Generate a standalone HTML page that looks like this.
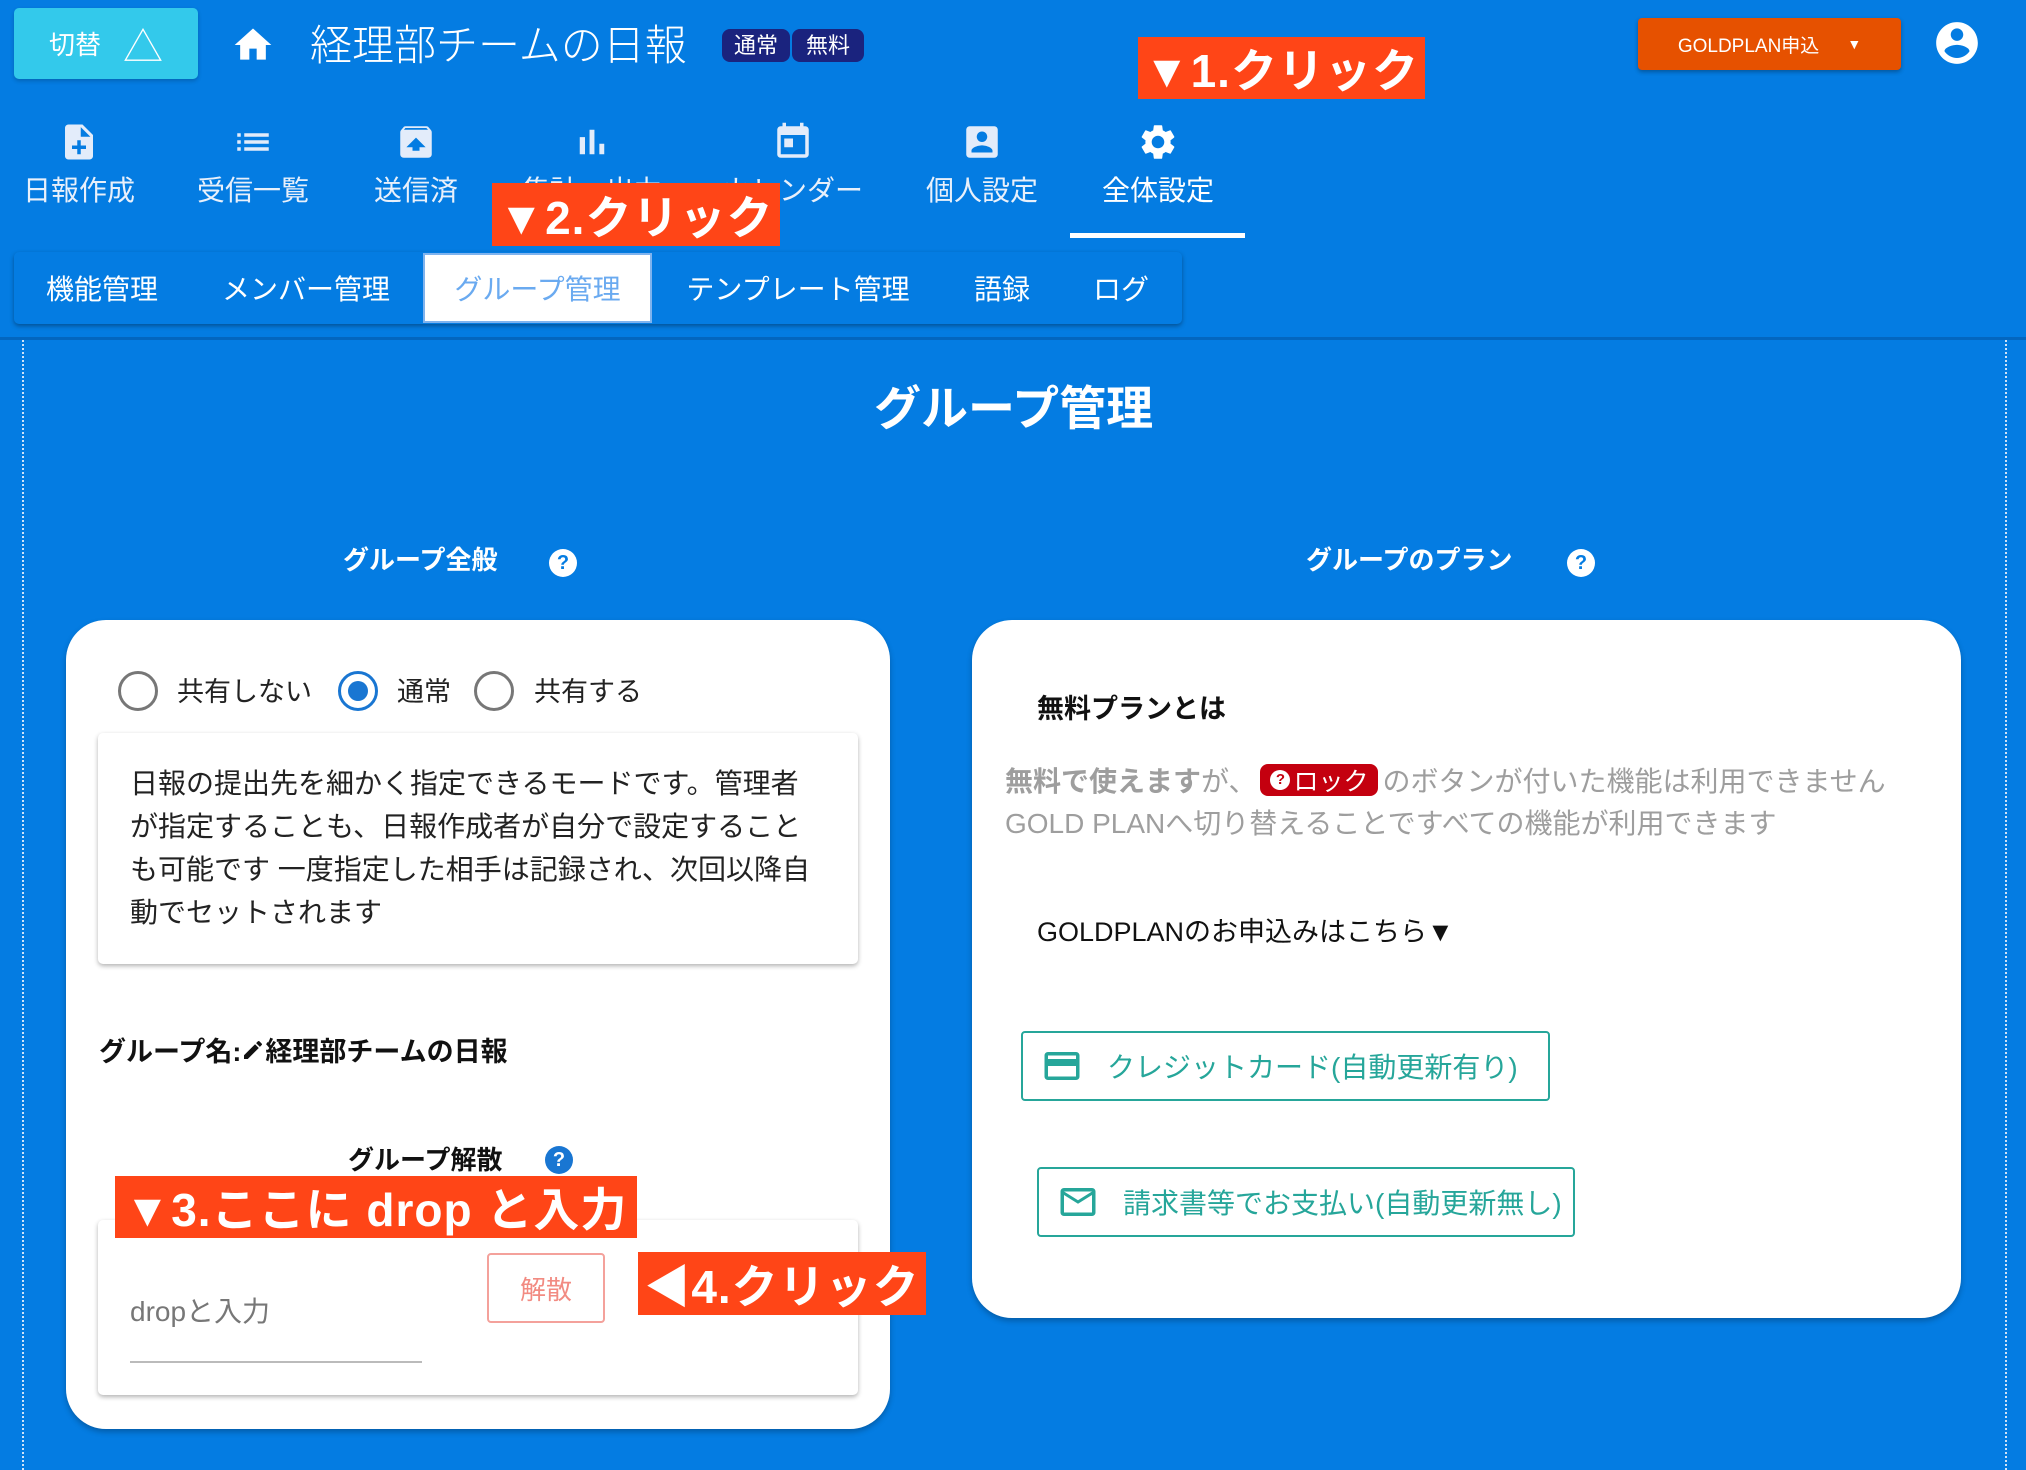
<!DOCTYPE html>
<html><head><meta charset="utf-8"><style>
*{margin:0;padding:0;box-sizing:border-box}
body{width:2026px;height:1470px;background:#047ce2;position:relative;overflow:hidden;font-family:"Liberation Sans","Noto Sans CJK JP",sans-serif;color:#fff}
.a{position:absolute;white-space:nowrap}
.tag{background:#ff4517;color:#fff;font-weight:bold;font-size:46px;display:flex;align-items:center;justify-content:center;letter-spacing:1px}
.nav{position:absolute;top:121px;width:180px;text-align:center;font-size:28px;color:#e8f0fb}
.nav svg{width:42px;height:42px;display:block;margin:0 auto 6px}
.sub{position:absolute;top:252px;height:72px;font-size:28px;display:flex;align-items:center;justify-content:center;color:#fff}
.card{position:absolute;background:#fff;border-radius:40px;box-shadow:0 3px 6px rgba(0,0,0,.25)}
.box{position:absolute;background:#fff;border-radius:5px;box-shadow:0 2px 5px rgba(0,0,0,.3)}
.q{display:inline-block;width:28px;height:28px;border-radius:50%;background:#fff;color:#047ce2;font-size:20px;font-weight:bold;text-align:center;line-height:28px}
.radio{position:absolute;width:40px;height:40px;border-radius:50%;border:3px solid #777}
.rl{position:absolute;font-size:27px;color:#222;top:670px}
</style></head><body>
<!-- header -->
<div class="a" style="left:14px;top:8px;width:184px;height:71px;background:#33c9eb;border-radius:5px;box-shadow:0 2px 4px rgba(0,0,0,.2);display:flex;align-items:center;justify-content:center;font-size:26px;gap:22px">切替 <span style="font-size:40px;font-weight:300">△</span></div>
<svg class="a" style="left:231px;top:23px" width="44" height="44" viewBox="0 0 24 24"><path fill="#fff" d="M10 20v-6h4v6h5v-8h3L12 3 2 12h3v8z"/></svg>
<div class="a" style="left:310px;top:12px;font-size:42px;font-weight:300">経理部チームの日報</div>
<div class="a" style="left:722px;top:29px;height:33px;display:flex;gap:2px;font-size:22px"><span style="background:#1a237e;border-radius:8px;padding:0 12px;line-height:33px">通常</span><span style="background:#1a237e;border-radius:8px;padding:0 14px;line-height:33px">無料</span></div>
<div class="a tag" style="left:1138px;top:37px;width:287px;height:62px">▼1.クリック</div>
<div class="a" style="left:1638px;top:18px;width:263px;height:52px;background:#e65100;border-radius:4px;box-shadow:0 2px 4px rgba(0,0,0,.3);font-size:19px;display:flex;align-items:center;justify-content:center;gap:28px">GOLDPLAN申込 <span style="font-size:14px">▼</span></div>
<svg class="a" style="left:1932px;top:18px" width="50" height="50" viewBox="0 0 24 24"><path fill="#fff" d="M12 2C6.48 2 2 6.48 2 12s4.48 10 10 10 10-4.480 10-10S17.52 2 12 2zm0 3c1.66 0 3 1.34 3 3s-1.34 3-3 3-3-1.34-3-3 1.34-3 3-3zm0 14.2c-2.5 0-4.71-1.28-6-3.22.03-1.99 4-3.08 6-3.08 1.99 0 5.97 1.09 6 3.08-1.29 1.94-3.5 3.22-6 3.22z"/></svg>
<!-- nav -->
<div class="nav" style="left:-11px"><svg viewBox="0 0 24 24"><path fill="#e3ecfa" d="M14 2H6c-1.1 0-1.99.9-1.99 2L4 20c0 1.1.89 2 1.99 2H18c1.1 0 2-.9 2-2V8l-6-6zm2 14h-3v3h-2v-3H8v-2h3v-3h2v3h3v2zm-3-7V3.5L18.5 9H13z"/></svg>日報作成</div>
<div class="nav" style="left:163px"><svg viewBox="0 0 24 24"><path fill="#e3ecfa" d="M3 13h2v-2H3v2zm0 4h2v-2H3v2zm0-8h2V7H3v2zm4 4h14v-2H7v2zm0 4h14v-2H7v2zM7 7v2h14V7H7z"/></svg>受信一覧</div>
<div class="nav" style="left:326px"><svg viewBox="0 0 24 24"><path fill="#e3ecfa" d="M20.55 5.22l-1.39-1.68C18.88 3.21 18.47 3 18 3H6c-.47 0-.88.21-1.15.55L3.46 5.22C3.17 5.57 3 6.01 3 6.5V19c0 1.1.89 2 2 2h14c1.1 0 2-.9 2-2V6.5c0-.49-.17-.93-.45-1.28zM12 9.5l5.5 5.5H14v2h-4v-2H6.5L12 9.5zM5.12 5l.82-1h12l.93 1H5.12z"/></svg>送信済</div>
<div class="nav" style="left:502px"><svg viewBox="0 0 24 24"><path fill="#e3ecfa" d="M5 9.2h3V19H5zM10.6 5h2.8v14h-2.8zm5.6 8H19v6h-2.8z"/></svg>集計・出力</div>
<div class="nav" style="left:703px"><svg viewBox="0 0 24 24"><path fill="#e3ecfa" d="M19 3h-1V1h-2v2H8V1H6v2H5c-1.11 0-1.99.9-1.99 2L3 19c0 1.1.89 2 2 2h14c1.1 0 2-.9 2-2V5c0-1.1-.9-2-2-2zm0 16H5V8h14v11zM7 10h5v5H7z"/></svg>カレンダー</div>
<div class="nav" style="left:892px"><svg viewBox="0 0 24 24"><path fill="#e3ecfa" d="M3 5v14c0 1.1.89 2 2 2h14c1.1 0 2-.9 2-2V5c0-1.1-.9-2-2-2H5c-1.11 0-2 .9-2 2zm12 4c0 1.66-1.34 3-3 3s-3-1.34-3-3 1.34-3 3-3 3 1.34 3 3zm-9 8c0-2 4-3.1 6-3.1s6 1.1 6 3.1v1H6v-1z"/></svg>個人設定</div>
<div class="nav" style="left:1068px;color:#fff"><svg viewBox="0 0 24 24"><path fill="#fff" d="M19.14 12.94c.04-.3.06-.61.06-.94 0-.32-.02-.64-.07-.94l2.030-1.58c.18-.14.23-.41.12-.61l-1.92-3.32c-.12-.22-.37-.29-.59-.22l-2.39.96c-.5-.38-1.03-.7-1.62-.94l-.36-2.54c-.04-.24-.24-.41-.48-.41h-3.84c-.24 0-.43.17-.47.41l-.36 2.54c-.59.24-1.13.57-1.62.94l-2.39-.96c-.22-.08-.47 0-.59.22L2.74 8.87c-.12.21-.08.47.12.61l2.03 1.58c-.05.3-.09.63-.09.94s.02.64.07.94l-2.03 1.58c-.18.14-.23.41-.12.61l1.92 3.32c.12.22.37.29.59.22l2.39-.96c.5.38 1.03.7 1.62.94l.36 2.54c.05.24.24.41.48.41h3.84c.24 0 .44-.17.47-.41l.36-2.54c.59-.24 1.13-.56 1.62-.94l2.39.96c.22.08.47 0 .59-.22l1.92-3.32c.12-.22.07-.47-.12-.61l-2.01-1.58zM12 15.6c-1.98 0-3.6-1.62-3.6-3.6s1.62-3.6 3.6-3.6 3.6 1.62 3.6 3.6-1.62 3.6-3.6 3.6z"/></svg>全体設定</div>
<div class="a" style="left:1070px;top:233px;width:175px;height:5px;background:#fff"></div>
<div class="a tag" style="left:492px;top:183px;width:288px;height:63px">▼2.クリック</div>
<!-- subtabs -->
<div class="a" style="left:14px;top:252px;width:1168px;height:72px;background:#047ce2;border-radius:5px;box-shadow:0 2px 5px rgba(0,0,0,.35)"></div>
<div class="sub" style="left:22px;width:160px">機能管理</div>
<div class="sub" style="left:211px;width:190px">メンバー管理</div>
<div class="sub" style="left:423px;top:253px;height:70px;width:229px;background:#fff;border:2px solid #7fb3ee;color:#6aaaf0">グループ管理</div>
<div class="sub" style="left:673px;width:250px">テンプレート管理</div>
<div class="sub" style="left:962px;width:80px">語録</div>
<div class="sub" style="left:1081px;width:80px">ログ</div>
<div class="a" style="left:0;top:337px;width:2026px;height:3px;background:#0366bf"></div>
<div class="a" style="left:22px;top:340px;height:1130px;border-left:2px dotted #cfe3f8"></div>
<div class="a" style="left:2005px;top:340px;height:1130px;border-left:2px dotted #cfe3f8"></div>
<!-- titles -->
<div class="a" style="left:874px;top:370px;font-size:47px;font-weight:bold">グループ管理</div>
<div class="a" style="left:343px;top:540px;font-size:26px;font-weight:bold">グループ全般</div>
<span class="a q" style="left:549px;top:549px">?</span>
<div class="a" style="left:1306px;top:540px;font-size:26px;font-weight:bold">グループのプラン</div>
<span class="a q" style="left:1567px;top:549px">?</span>
<!-- left card -->
<div class="card" style="left:66px;top:620px;width:824px;height:809px"></div>
<div class="radio" style="left:118px;top:671px"></div>
<div class="rl" style="left:177px">共有しない</div>
<div class="radio" style="left:338px;top:671px;border-color:#1976d2"><div style="position:absolute;left:7px;top:7px;width:20px;height:20px;border-radius:50%;background:#1976d2"></div></div>
<div class="rl" style="left:397px">通常</div>
<div class="radio" style="left:474px;top:671px"></div>
<div class="rl" style="left:534px">共有する</div>
<div class="box" style="left:98px;top:733px;width:760px;height:231px"></div>
<div class="a" style="left:130px;top:762px;font-size:28px;line-height:43px;color:#222">日報の提出先を細かく指定できるモードです。管理者<br>が指定することも、日報作成者が自分で設定すること<br>も可能です 一度指定した相手は記録され、次回以降自<br>動でセットされます</div>
<div class="a" style="left:99px;top:1030px;font-size:27px;font-weight:bold;color:#111;display:flex;align-items:center">グループ名:<svg width="24" height="24" viewBox="0 0 24 24"><path fill="#111" d="M3 17.25V21h3.75L17.81 9.94l-3.75-3.75L3 17.25zM20.71 7.04c.39-.39.39-1.02 0-1.41l-2.34-2.34c-.39-.39-1.02-.39-1.41 0l-1.83 1.83 3.75 3.75 1.83-1.83z"/></svg>経理部チームの日報</div>
<div class="a" style="left:348px;top:1140px;font-size:26px;font-weight:bold;color:#111">グループ解散</div>
<span class="a q" style="left:545px;top:1146px;background:#1976d2;color:#fff">?</span>
<div class="box" style="left:98px;top:1220px;width:760px;height:175px"></div>
<div class="a tag" style="left:115px;top:1176px;width:522px;height:62px">▼3.ここに drop と入力</div>
<div class="a" style="left:130px;top:1290px;font-size:28px;color:#777">dropと入力</div>
<div class="a" style="left:130px;top:1361px;width:292px;height:2px;background:#bbb"></div>
<div class="a" style="left:487px;top:1253px;width:118px;height:70px;border:2px solid #f4a19b;border-radius:4px;color:#f28b82;font-size:26px;display:flex;align-items:center;justify-content:center">解散</div>
<div class="a tag" style="left:638px;top:1252px;width:288px;height:63px">◀4.クリック</div>
<!-- right card -->
<div class="card" style="left:972px;top:620px;width:989px;height:698px"></div>
<div class="a" style="left:1037px;top:687px;font-size:27px;font-weight:bold;color:#111">無料プランとは</div>
<div class="a" style="left:1005px;top:760px;font-size:28px;color:#9e9e9e;display:flex;align-items:center"><b>無料で使えます</b>が、<span style="background:#c4000f;color:#fff;border-radius:8px;padding:0 10px;height:32px;display:inline-flex;align-items:center;font-size:25px;margin:0 4px"><span style="display:inline-block;width:20px;height:20px;border-radius:50%;background:#fff;color:#c4000f;font-size:15px;font-weight:bold;text-align:center;line-height:20px;margin-right:3px">?</span>ロック</span>のボタンが付いた機能は利用できません</div>
<div class="a" style="left:1005px;top:802px;font-size:28px;color:#9e9e9e">GOLD PLANへ切り替えることですべての機能が利用できます</div>
<div class="a" style="left:1037px;top:910px;font-size:27px;color:#111">GOLDPLANのお申込みはこちら▼</div>
<div class="a" style="left:1021px;top:1031px;width:529px;height:70px;border:2px solid #26a69a;border-radius:4px;display:flex;align-items:center;color:#26a69a;font-size:28px"><svg style="margin:0 24px 0 18px" width="42" height="42" viewBox="0 0 24 24"><path fill="#26a69a" d="M20 4H4c-1.11 0-1.99.89-1.99 2L2 18c0 1.11.89 2 2 2h16c1.11 0 2-.89 2-2V6c0-1.11-.89-2-2-2zm0 14H4v-6h16v6zm0-10H4V6h16v2z"/></svg>クレジットカード(自動更新有り)</div>
<div class="a" style="left:1037px;top:1167px;width:538px;height:70px;border:2px solid #26a69a;border-radius:4px;display:flex;align-items:center;color:#26a69a;font-size:28px"><svg style="margin:0 24px 0 18px" width="42" height="42" viewBox="0 0 24 24"><path fill="#26a69a" d="M20 4H4c-1.1 0-1.99.9-1.99 2L2 18c0 1.1.9 2 2 2h16c1.1 0 2-.9 2-2V6c0-1.1-.9-2-2-2zm0 14H4V8l8 5 8-5v10zm-8-7L4 6h16l-8 5z"/></svg>請求書等でお支払い(自動更新無し)</div>
</body></html>
